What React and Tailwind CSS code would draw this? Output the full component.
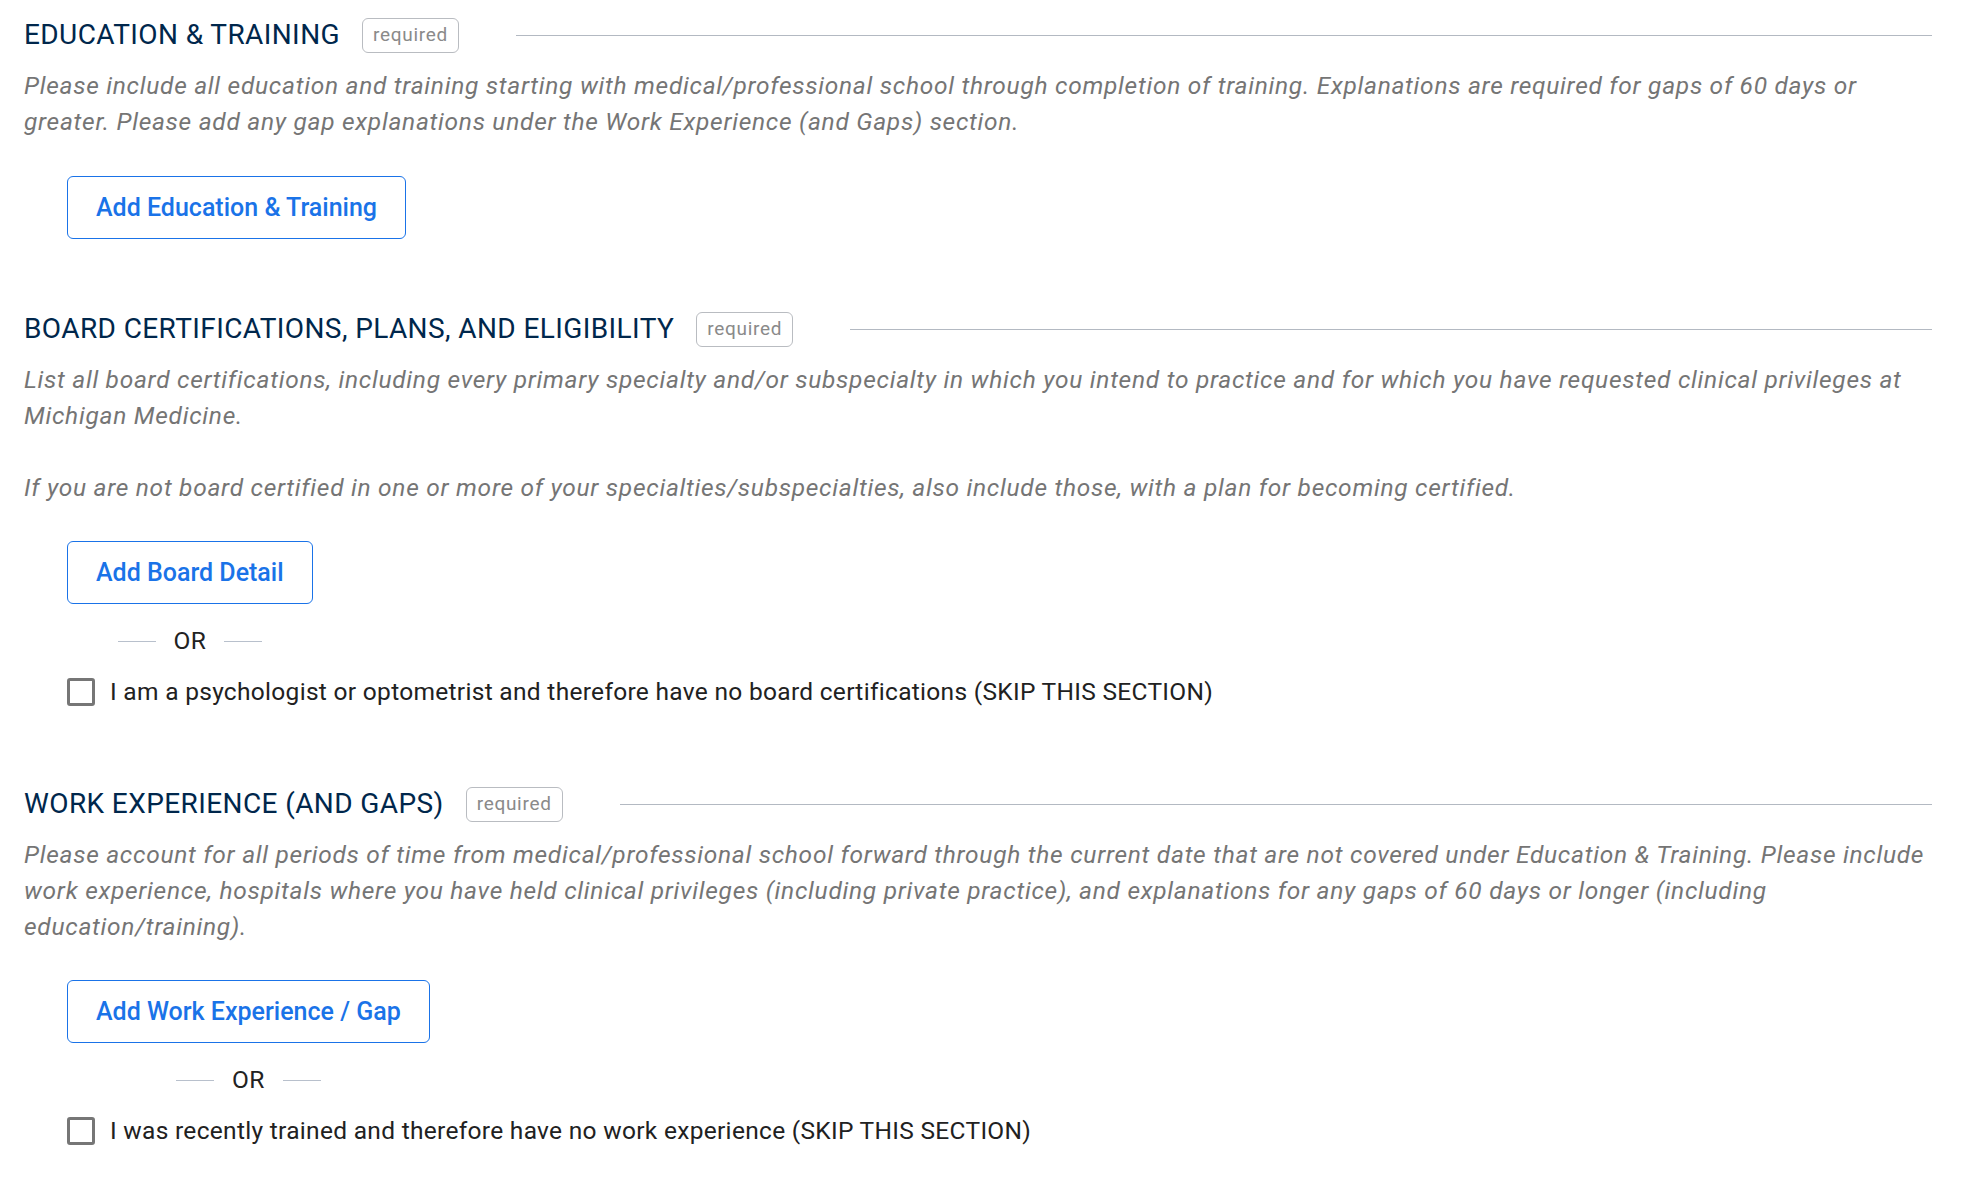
import React from "react";

function SectionHeader({ title }) {
  return (
    <div className="flex items-center h-[36px]">
      <h2 className="text-[28px] leading-[36px] tracking-[0.4px] text-[#00274c] font-normal whitespace-nowrap">{title}</h2>
      <span className="ml-[22px] h-[35px] px-[10px] flex items-center border border-[#b9bcc1] rounded-[6px] text-[19px] tracking-[0.7px] text-[#8a8a8a]">
        required
      </span>
      <div className="ml-[57px] flex-1 h-px bg-[#b3b9c2]" />
    </div>
  );
}

function Description({ children }) {
  return (
    <p className="mt-[15px] text-[24.5px] leading-[36px] tracking-[0.72px] italic text-[#757575]">{children}</p>
  );
}

function AddButton({ label }) {
  return (
    <button className="h-[63px] px-[28px] border border-[#1a73e8] rounded-[6px] bg-white text-[25px] font-medium text-[#1a73e8] whitespace-nowrap">
      {label}
    </button>
  );
}

function OrDivider() {
  return (
    <div className="mt-[22px] h-[30px] flex items-center justify-center gap-[18px]">
      <span className="w-[38px] h-px bg-[#b8c0cc]" />
      <span className="text-[24.5px] leading-[30px] tracking-[0.3px] text-[#222]">OR</span>
      <span className="w-[38px] h-px bg-[#b8c0cc]" />
    </div>
  );
}

function SkipCheck({ label }) {
  return (
    <label className="mt-[21px] ml-[43px] h-[30px] flex items-center gap-[15px] cursor-pointer">
      <span className="w-[28px] h-[28px] border-[3px] border-[#767676] rounded-[3px] bg-white shrink-0" />
      <span className="text-[24.5px] leading-[30px] tracking-[0.3px] text-[#212121] whitespace-nowrap">{label}</span>
    </label>
  );
}

export default function App() {
  return (
    <div className="min-h-screen bg-white pl-[24px] pr-[40px] pt-[17px] pb-[40px] font-['Roboto',sans-serif]">
      <section>
        <SectionHeader title="EDUCATION & TRAINING" />
        <Description>
          Please include all education and training starting with medical/professional school through completion of
          training. Explanations are required for gaps of 60 days or greater. Please add any gap explanations under the
          Work Experience (and Gaps) section.
        </Description>
        <div className="mt-[36px] ml-[43px]">
          <AddButton label="Add Education & Training" />
        </div>
      </section>

      <section className="mt-[72px]">
        <SectionHeader title="BOARD CERTIFICATIONS, PLANS, AND ELIGIBILITY" />
        <Description>
          List all board certifications, including every primary specialty and/or subspecialty in which you intend to
          practice and for which you have requested clinical privileges at Michigan Medicine.
          <br />
          <br />
          If you are not board certified in one or more of your specialties/subspecialties, also include those, with a
          plan for becoming certified.
        </Description>
        <div className="mt-[35px] ml-[43px] inline-flex flex-col">
          <AddButton label="Add Board Detail" />
          <OrDivider />
        </div>
        <SkipCheck label="I am a psychologist or optometrist and therefore have no board certifications (SKIP THIS SECTION)" />
      </section>

      <section className="mt-[79px]">
        <SectionHeader title="WORK EXPERIENCE (AND GAPS)" />
        <Description>
          Please account for all periods of time from medical/professional school forward through the current date that
          are not covered under Education &amp; Training. Please include work experience, hospitals where you have held
          clinical privileges (including private practice), and explanations for any gaps of 60 days or longer
          (including education/training).
        </Description>
        <div className="mt-[35px] ml-[43px] inline-flex flex-col">
          <AddButton label="Add Work Experience / Gap" />
          <OrDivider />
        </div>
        <SkipCheck label="I was recently trained and therefore have no work experience (SKIP THIS SECTION)" />
      </section>
    </div>
  );
}
